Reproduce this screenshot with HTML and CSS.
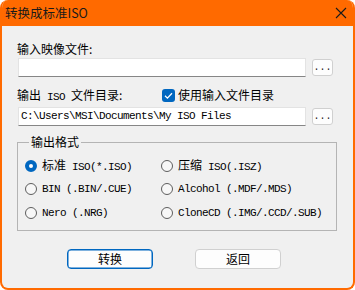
FILE: index.html
```html
<!DOCTYPE html>
<html lang="zh-CN">
<head>
<meta charset="utf-8">
<title>转换成标准ISO</title>
<link rel="stylesheet" href="styles.css">
</head>
<body>
<div class="window">
  <div class="titlebar">
    <span class="title">转换成标准ISO</span>
    <svg class="close" width="12" height="12" viewBox="0 0 12 12"><path d="M1 1 L11 11 M11 1 L1 11" stroke="#1a1a1a" stroke-width="1.1" fill="none"/></svg>
  </div>
  <div class="content">
    <div class="label l1">输入映像文件:</div>
    <div class="field-row">
      <div class="input"></div>
      <button class="browse">...</button>
    </div>
    <div class="label-row">
      <div class="label l2">输出<span class="m"> ISO </span>文件目录:</div>
      <div class="check"><span class="box"><svg width="13" height="13" viewBox="0 0 13 13"><path d="M3 6.8 L5.4 9.1 L10 4.2" stroke="#fff" stroke-width="1.3" fill="none"/></svg></span>使用输入文件目录</div>
    </div>
    <div class="field-row">
      <div class="input m">C:\Users\MSI\Documents\My ISO Files</div>
      <button class="browse">...</button>
    </div>
    <fieldset class="group">
      <legend>输出格式</legend>
      <div class="radios">
        <div class="opt"><span class="radio on"></span><span>标准<span class="m"> ISO(*.ISO)</span></span></div>
        <div class="opt"><span class="radio"></span><span>压缩<span class="m"> ISO(.ISZ)</span></span></div>
        <div class="opt"><span class="radio"></span><span class="m">BIN (.BIN/.CUE)</span></div>
        <div class="opt"><span class="radio"></span><span class="m">Alcohol (.MDF/.MDS)</span></div>
        <div class="opt"><span class="radio"></span><span class="m">Nero (.NRG)</span></div>
        <div class="opt"><span class="radio"></span><span class="m">CloneCD (.IMG/.CCD/.SUB)</span></div>
      </div>
    </fieldset>
    <div class="actions">
      <button class="btn primary">转换</button>
      <button class="btn">返回</button>
    </div>
  </div>
</div>
</body>
</html>
```

FILE: styles.css
```css
* { box-sizing: border-box; }
html, body { margin: 0; padding: 0; background: #ffffff; }
body {
  font-family: "Noto Sans CJK SC", "Noto Sans", sans-serif;
  font-size: 12px;
  line-height: 16px;
  color: #000;
}
.window {
  width: 355px;
  height: 290px;
  border: 2px solid #ff6a00;
  border-top: 0;
  border-radius: 8px;
  overflow: hidden;
  background: #f0f0f0;
  display: flex;
  flex-direction: column;
}
.titlebar {
  height: 26px;
  flex: none;
  background: #ff6a00;
  display: flex;
  align-items: center;
  justify-content: space-between;
  margin: 0 -2px;
  padding-left: 5px;
  padding-right: 8px;
}
.title { font-size: 12.5px; color: #1a1a1a; margin-top: -1px; }
.close { display: block; }
.content {
  padding: 15px 0 0 15px;
}
.label { height: 16px; }
.m {
  font-family: "Liberation Mono", "Noto Sans CJK SC", monospace;
  font-size: 11px;
  letter-spacing: -0.6px;
  white-space: pre;
}
.field-row {
  display: flex;
  align-items: center;
  gap: 6px;
  margin-top: 1px;
}
.input {
  width: 288px;
  height: 19px;
  margin-left: 1px;
  background: #fff;
  border: 1px solid #e3e3e3;
  border-bottom: 1px solid #868686;
  padding: 0 2px;
  line-height: 17px;
  white-space: nowrap;
  overflow: hidden;
}
.browse {
  width: 21px;
  height: 17px;
  padding: 0;
  margin: 0;
  border: 1px solid #d0d0d0;
  border-radius: 3px;
  background: #fdfdfd;
  font-family: "Liberation Mono", monospace;
  font-size: 10px;
  line-height: 15px;
  color: #222;
}
.label-row {
  display: flex;
  align-items: center;
  margin-top: 9px;
  height: 18px;
}
.l2 { width: 145px; }
.check { display: flex; align-items: center; gap: 3px; }
.box {
  width: 13px;
  height: 13px;
  border-radius: 3px;
  background: #0067c0;
  display: block;
}
.box svg { display: block; }
.label-row + .field-row { margin-top: 3px; }
.group {
  margin: 8px 0 0 0;
  width: 320px;
  border: 1px solid #b4b4b4;
  padding: 4px 0 5px 7px;
}
.group legend {
  padding: 0 2px;
  margin-left: 4px;
  line-height: 16px;
}
.radios {
  display: grid;
  grid-template-columns: 136px 1fr;
  grid-auto-rows: 23.5px;
}
.opt {
  display: flex;
  align-items: center;
  gap: 5px;
  white-space: nowrap;
}
.radio {
  width: 12px;
  height: 12px;
  flex: none;
  border-radius: 50%;
  border: 1px solid #5d5d5d;
  background: #f7f7f7;
}
.radio.on {
  border: 4px solid #0067c0;
  background: #fff;
}
.actions {
  display: flex;
  gap: 42px;
  margin: 18px 0 0 50px;
}
.btn {
  width: 86px;
  height: 20px;
  padding: 0;
  border: 1px solid #d0d0d0;
  border-radius: 4px;
  background: #fdfdfd;
  font-family: "Noto Sans CJK SC", sans-serif;
  font-size: 12px;
  line-height: 18px;
  color: #000;
}
.btn.primary {
  border-color: #0067c0;
  box-shadow: inset 0 0 0 0.5px #0067c0;
}
```
